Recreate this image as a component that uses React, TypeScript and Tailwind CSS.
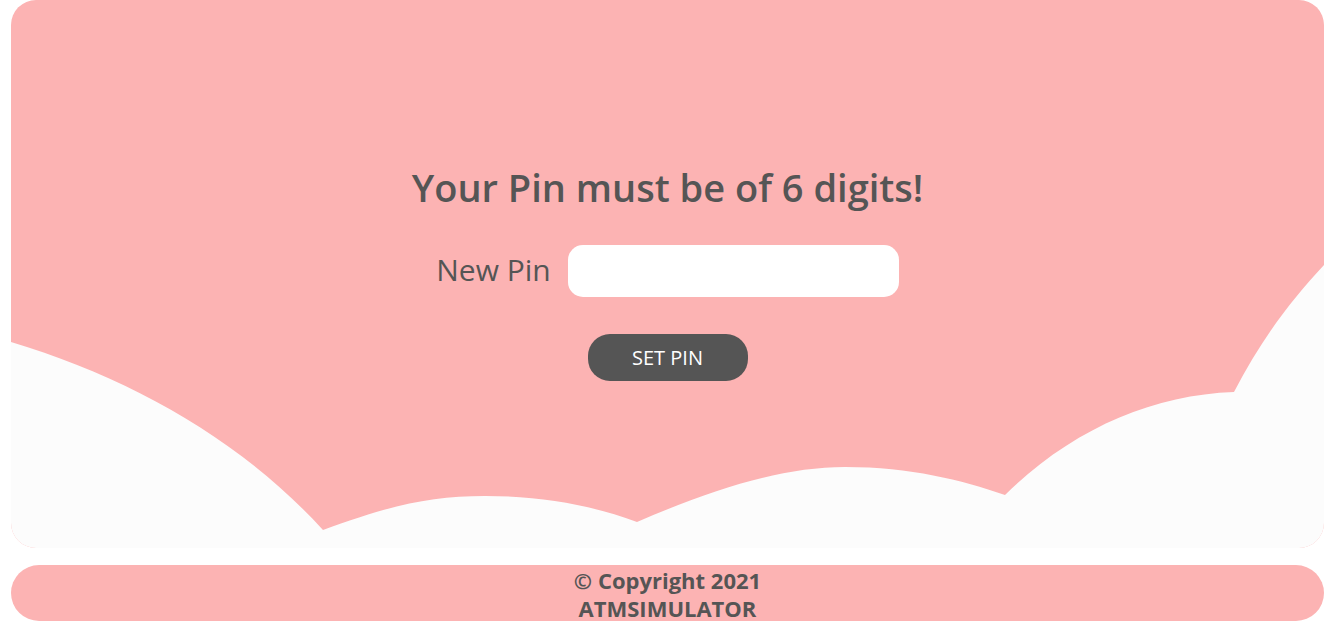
import { useEffect, useRef } from 'react';

function Clouds() {
  return (
    <svg
      className="absolute inset-0 h-full w-full"
      viewBox="0 0 1313 548"
      preserveAspectRatio="none"
    >
      <path
        fill="#fcfcfc"
        d="M0,342 C120,378 230,440 312,530 C380,505 420,496 474,496 C530,496 580,505 626,522 C700,490 770,467 834,467 C900,467 950,480 994,495 C1060,430 1140,395 1223,392 C1250,340 1280,300 1313,265 L1313,548 L0,548 Z"
      />
    </svg>
  );
}

export default function App() {
  const pinRef = useRef<HTMLInputElement>(null);

  useEffect(() => {
    pinRef.current?.focus();
  }, []);

  return (
    <div className="min-h-screen w-full bg-white pl-[11px] pr-[5px] font-['Open_Sans','Noto_Sans',sans-serif] text-[#555555]">
      <div className="relative h-[548px] overflow-hidden rounded-[25px] bg-[#fcb3b3]">
        <Clouds />
        <div className="relative flex flex-col items-center pt-[163px]">
          <h1 className="text-[38px] font-semibold leading-[48px]">Your Pin must be of 6 digits!</h1>
          <div className="mt-[34px] flex items-center gap-[17px]">
            <label htmlFor="pin" className="-mt-[3px] text-[30px] leading-none">New Pin</label>
            <input
              id="pin"
              ref={pinRef}
              type="password"
              className="h-[52px] w-[331px] rounded-[15px] bg-white px-[5px] text-[24px] text-black caret-black outline-none"
            />
          </div>
          <button className="mt-[37px] h-[47px] w-[160px] rounded-[22px] bg-[#555555] text-[20px] leading-none text-white">
            SET PIN
          </button>
        </div>
      </div>
      <footer className="mt-[17px] flex h-[56px] flex-col items-center rounded-full bg-[#fcb3b3] text-center text-[22px] font-bold leading-[28px]">
        <p className="mt-[1px]">© Copyright 2021</p>
        <p>ATMSIMULATOR</p>
      </footer>
    </div>
  );
}
